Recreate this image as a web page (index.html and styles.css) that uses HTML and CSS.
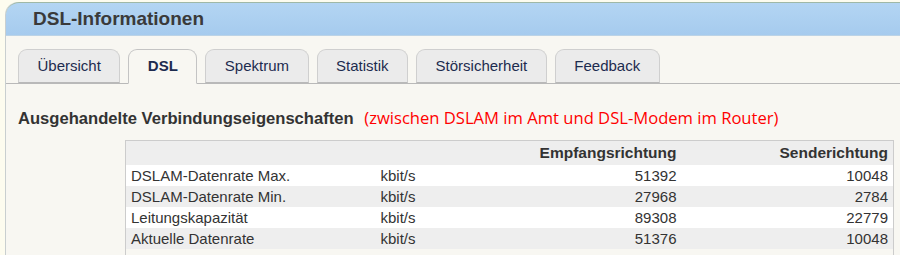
FILE: index.html
```html
<!DOCTYPE html>
<html lang="de">
<head>
    <meta charset="UTF-8">
    <title>DSL-Informationen</title>
    <link rel="stylesheet" href="styles.css">
</head>
<body>
    <div class="page">
        <div class="page-head">
            <h1>DSL-Informationen</h1>
        </div>

        <ul class="tabs">
            <li class="tab">Übersicht</li>
            <li class="tab active">DSL</li>
            <li class="tab">Spektrum</li>
            <li class="tab">Statistik</li>
            <li class="tab">Störsicherheit</li>
            <li class="tab">Feedback</li>
        </ul>

        <div class="content">
            <h2>Ausgehandelte Verbindungseigenschaften <span class="note">(zwischen DSLAM im Amt und DSL-Modem im Router)</span></h2>

            <table class="rates">
                <colgroup>
                    <col class="label">
                    <col class="unit">
                    <col class="down">
                    <col class="up">
                </colgroup>
                <thead>
                    <tr>
                        <th></th>
                        <th></th>
                        <th class="num">Empfangsrichtung</th>
                        <th class="num">Senderichtung</th>
                    </tr>
                </thead>
                <tbody>
                    <tr>
                        <td>DSLAM-Datenrate Max.</td>
                        <td>kbit/s</td>
                        <td class="num">51392</td>
                        <td class="num">10048</td>
                    </tr>
                    <tr>
                        <td>DSLAM-Datenrate Min.</td>
                        <td>kbit/s</td>
                        <td class="num">27968</td>
                        <td class="num">2784</td>
                    </tr>
                    <tr>
                        <td>Leitungskapazität</td>
                        <td>kbit/s</td>
                        <td class="num">89308</td>
                        <td class="num">22779</td>
                    </tr>
                    <tr>
                        <td>Aktuelle Datenrate</td>
                        <td>kbit/s</td>
                        <td class="num">51376</td>
                        <td class="num">10048</td>
                    </tr>
                    <tr>
                        <td>&nbsp;</td>
                        <td></td>
                        <td></td>
                        <td></td>
                    </tr>
                </tbody>
            </table>
        </div>
    </div>
</body>
</html>
```

FILE: styles.css
```css
body {
    margin: 0;
    background: #fdfcef;
    font-family: "Liberation Sans", Arial, sans-serif;
    color: #333;
    overflow: hidden;
}

.page {
    margin: 2px 0 0 5px;
    height: 260px;
    background: #f8f7f2;
    border-left: 1px solid #c9cfd0;
    border-top-left-radius: 13px;
}

.page-head {
    height: 32px;
    background: linear-gradient(#b3d5f3, #a6cbee);
    border-top: 1px solid #9fb8a6;
    border-bottom: 1px solid #bcd3e6;
    border-top-left-radius: 13px;
    padding-left: 27px;
}

.page-head h1 {
    margin: 0;
    font-size: 19px;
    line-height: 32px;
    color: #3a3a3a;
}

.tabs {
    display: flex;
    gap: 8px;
    list-style: none;
    margin: 13px 0 0;
    padding: 0 0 0 12px;
    border-bottom: 1px solid #b9b9b9;
}

.tab {
    padding: 0 18.5px;
    height: 32px;
    line-height: 32px;
    margin-bottom: -1px;
    font-size: 15px;
    color: #1d2b4f;
    background: #ebebeb;
    border: 1px solid #cfcfcf;
    border-bottom-color: #b9b9b9;
    border-radius: 9px 9px 0 0;
}

.tab.active {
    font-weight: bold;
    background: #f8f7f2;
    border-color: #c4c4c4;
    border-bottom-color: #f8f7f2;
    height: 33px;
}

.content {
    padding: 0 7px 0 12px;
}

.content h2 {
    margin: 21px 0 8px;
    font-size: 16.6px;
    line-height: 26px;
    color: #333;
}

.note {
    margin-left: 6px;
    font-family: "Open Sans", sans-serif;
    font-weight: normal;
    font-size: 16.6px;
    color: #f00;
}

.rates {
    margin-left: 107px;
    width: 768px;
    table-layout: fixed;
    border-collapse: collapse;
    border: 1px solid #cccccc;
    border-bottom: none;
    font-size: 15px;
    color: #333;
}

.rates col.label {
    width: 250px;
}

.rates col.unit {
    width: 100px;
}

.rates col.down {
    width: 206px;
}

.rates col.up {
    width: 212px;
}

.rates th {
    font-weight: bold;
    font-size: 15.5px;
    height: 24px;
    padding: 0 5px;
    background: #eeeeee;
}

.rates td {
    height: 21px;
    padding: 0 5px;
    background: #ffffff;
}

.rates tbody tr:nth-child(even) td {
    background: #eeeeee;
}

.rates tbody tr:last-child td {
    background: #f8f7f2;
}

.rates .num {
    text-align: right;
}
```
